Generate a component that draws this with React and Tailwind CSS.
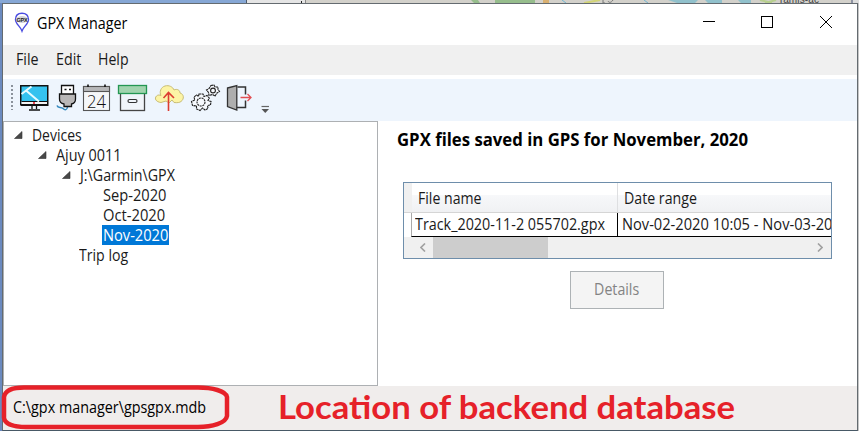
import React from 'react';

const sans = 'font-["Open_Sans","Noto_Sans",sans-serif]';

function Text({ children, className = '' }) {
  return <span className={`inline-block origin-left whitespace-pre ${className}`}>{children}</span>;
}

function AppLogo() {
  return (
    <svg width="16" height="21" viewBox="0 0 16 21" fill="none">
      <path d="M8 19 C6.5 14.5 1.5 12 1.5 7.5 C1.5 3.5 4 1.2 8 1.2 C12 1.2 14.5 3.5 14.5 7.5 C14.5 12 9.5 14.5 8 19Z" fill="#fff" stroke="#4a4ce0" strokeWidth="1.4" />
      <ellipse cx="8" cy="7.5" rx="5.8" ry="3.6" fill="#d2d2d8" />
      <text x="2.4" y="9.5" fontSize="5.5" fontWeight="700" textLength="11.2" fontFamily="Liberation Sans" fill="#222">GPX</text>
    </svg>
  );
}

function Backdrop() {
  return (
    <svg width="859" height="3" viewBox="0 0 859 3" className="block">
      <rect width="247" height="3" fill="#86a7d5" />
      <rect x="246" width="1" height="3" fill="#4d5968" />
      <rect x="247" width="59" height="3" fill="#e5e5e5" />
      <rect x="301" y="1" width="1" height="2" fill="#222" />
      <rect x="305" width="1" height="3" fill="#888" />
      <rect x="306" width="545" height="3" fill="#d3d1cb" />
      <path d="M471 0H478L480 3H474Z M495 0H535V3H495Z" fill="#96bd8c" />
      <path d="M543 0H549V3H543Z" fill="#d9b071" />
      <path d="M562 0L566 3M644 0L648 3" stroke="#72b5d2" />
      <path d="M584 3L600 0" stroke="#d2d477" strokeWidth="2" />
      <path d="M668 0H698L695 3H677Z M705 0H722V3H708Z M738 0H751V3H741Z" fill="#91c1cc" />
      <path d="M760 0L772 3M765 3L776 0" stroke="#b7cf8e" strokeWidth="2" />
      <text x="778" y="3" fontSize="10" textLength="41" fontFamily="Liberation Sans" fill="#444">Tamis-ac</text>
      <path d="M603 0V3H605M613 0C611 3 609 3 608 1" stroke="#777" fill="none" />
      <rect x="851" width="2" height="3" fill="#8e93a3" />
      <rect x="853" width="6" height="3" fill="#ddd" />
    </svg>
  );
}

function ToolbarIcons() {
  return (
    <svg width="275" height="42" viewBox="0 79 275 42" fill="none" className="block">
      <path d="M12 85V110" stroke="#8b929b" strokeWidth="2" strokeDasharray="2 2" />
      <g>
        <rect x="20.75" y="85.75" width="27" height="18.5" fill="#35c2ef" stroke="#111" strokeWidth="1.5" />
        <path d="M21.5 101.5H47V104H21.5Z" fill="#f4f4f4" />
        <path d="M21.5 101.5H47M20.5 105.5H48.5" stroke="#111" />
        <path d="M21.5 94L31.5 86.5M26 90.5L39 101.5" stroke="#e8fbff" strokeWidth="2" />
        <rect x="33" y="102" width="2" height="2" fill="#e74856" />
        <path d="M32 106V109M36.5 106V109M29 110H40" stroke="#111" strokeWidth="1.3" />
      </g>
      <g stroke="#111" strokeWidth="1.3">
        <path d="M57 105.5C58 108.5 61 106.5 63 108.5C65 110.5 67 110 67.5 107" stroke="#3388bd" strokeWidth="1.5" />
        <path d="M61.5 94V85.5H73.5V94" fill="#fff" />
        <path d="M64.5 89.5H66.5M69 89.5H71" />
        <path d="M59.5 94H75.5V99C75.5 102 74 103.5 71.5 104V106.5H64V104C61 103.5 59.5 102 59.5 99Z" fill="#b9b7b7" />
      </g>
      <g stroke="#555" strokeWidth="1.1">
        <rect x="83.5" y="86.5" width="26" height="24" fill="#f5f7f9" />
        <rect x="83.5" y="86.5" width="26" height="5" fill="#b6b7b9" />
        <path d="M88 84.5V87M105 84.5V87" stroke="#111" strokeWidth="1.6" />
        <text x="87" y="108" fontSize="19" textLength="19" lengthAdjust="spacingAndGlyphs" fontFamily="Open Sans" fontWeight="300" fill="#111" stroke="none">24</text>
      </g>
      <g>
        <rect x="120.5" y="92.5" width="24" height="18" fill="#f1f5fa" stroke="#444" strokeWidth="1.3" />
        <rect x="118.5" y="85.5" width="28" height="8" fill="#a1d4ae" stroke="#249753" strokeWidth="1.3" />
        <rect x="128" y="99.5" width="9" height="3" rx="1.5" stroke="#333" strokeWidth="1.2" />
      </g>
      <g>
        <path d="M161 102.5C156 102 154 98.5 156.5 96C158 94.5 160 95 161 95.5C159 92 161 87 165 86C169 84.8 173 87 174 90C177 88.5 180 90 180 93C184 94 184.5 99 181 101.5C180 102.5 177 103 174 102.5L172 100L169 103L166 101Z" fill="#fcf4a5" stroke="#c9bd75" />
        <path d="M168.5 111V93M163.5 98L168.5 92.5L174 98" stroke="#dc3c31" strokeWidth="1.6" />
      </g>
      <g stroke="#222" strokeWidth="1.1" fill="#f6f9fd">
        <path d="M199 94L203 94L204 96.5L207 95.5L209.3 98L208 100.5L211 101.5L210.5 105L207.5 105.5L208 108.5L205 110L202.5 108L200 110.5L196.5 109L196.5 106L192.5 105.5L191.5 101.5L194.8 100L194 97L196.5 95L198.5 96.5Z" strokeDasharray="2.4 .5" />
        <circle cx="201" cy="102" r="4" strokeDasharray="2 .7" />
        <path d="M211 85.5L214 85L215 87L218 87L218 89.5L219.5 91.5L217 93L215 96L212.5 94.5L209 95.5L208.5 92.5L206.5 90L209 88.5Z" strokeDasharray="2.4 .5" />
        <circle cx="213" cy="90.5" r="2.4" />
      </g>
      <g>
        <path d="M237.5 87H245.5V94.5M245.5 100.5V107.5H237" stroke="#333" strokeWidth="1.5" />
        <path d="M227.5 88L236.8 85.5V110L227.5 106.5Z" fill="#aeaeae" stroke="#333" strokeWidth="1.3" />
        <path d="M240.5 97.5H251M247.5 94L251 97.5L247.5 101" stroke="#e24e52" strokeWidth="1.3" />
      </g>
      <path d="M261.5 106.5H269" stroke="#666" strokeWidth="1.2" />
      <path d="M261.5 109H269L265.25 113Z" fill="#555" />
    </svg>
  );
}

const rows = [
  { label: 'Devices', pad: 'pl-[10px]', open: true, fit: 'scale-x-[.9]' },
  { label: 'Ajuy 0011', pad: 'pl-[34px]', open: true, fit: 'scale-x-[.93]' },
  { label: 'J:\\Garmin\\GPX', pad: 'pl-[58px]', open: true, fit: 'scale-x-[.92]' },
  { label: 'Sep-2020', pad: 'pl-[81px]', fit: 'scale-x-[.945]' },
  { label: 'Oct-2020', pad: 'pl-[81px]', fit: 'scale-x-[.95]' },
  { label: 'Nov-2020', pad: 'pl-[81px]', selected: true, fit: 'scale-x-[.945]' },
  { label: 'Trip log', pad: 'pl-[57px]', fit: 'scale-x-[.91]' },
];

function Tree() {
  return (
    <aside className="h-[265px] w-[375px] shrink-0 border border-[#adb0b3] bg-white pt-[3px]">
      {rows.map((r) => (
        <div key={r.label} className={`flex h-5 items-center ${r.pad}`}>
          <svg width="9" height="9" viewBox="0 0 9 9" className="mr-[8px] shrink-0">
            {r.open && <path d="M0.5 7.5L8 0.5V7.5Z" fill="#484848" stroke="#333" strokeWidth=".6" />}
          </svg>
          <div className={r.selected ? 'h-5 w-[67px] bg-[#0078d7] pl-px text-white' : 'h-5 pl-px'}>
            <Text className={`align-top leading-5 ${r.fit}`}>{r.label}</Text>
          </div>
        </div>
      ))}
    </aside>
  );
}

function FileTable() {
  return (
    <div className="ml-[25px] h-[77px] w-[429px] overflow-hidden border border-[#6e8eab] bg-white">
      <div className="flex h-[30px] border-b border-[#d5d5d5] bg-linear-to-b from-white from-40% via-[#f7f8fa] via-41% to-[#f0f1f3]">
        <div className="w-2 shrink-0 bg-[#f0f0f0]" />
        <div className="w-[206px] shrink-0 border-r border-[#dedfe1] pl-[6px]">
          <Text className="align-top leading-[31px] scale-x-[.91]">File name</Text>
        </div>
        <div className="pl-[6px]">
          <Text className="align-top leading-[31px] scale-x-[.915]">Date range</Text>
        </div>
      </div>
      <div className="ml-[7px] flex h-6 border-b border-l border-b-black border-l-[#aaa]">
        <div className="w-[206px] shrink-0 border-r border-black pl-[3px]">
          <Text className="align-top leading-[22px] scale-x-[.926]">Track_2020-11-2 055702.gpx</Text>
        </div>
        <div className="pl-1">
          <Text className="align-top leading-[22px] scale-x-[.945]">Nov-02-2020 10:05 - Nov-03-2020</Text>
        </div>
      </div>
      <div className="flex h-[21px] items-center bg-[#f0f0f0]">
        <div className="flex w-[29px] justify-center pl-2">
          <svg width="6" height="9" fill="none"><path d="M5 .5L1 4.5L5 8.5" stroke="#a0a0a0" strokeWidth="1.6" /></svg>
        </div>
        <div className="h-full w-[115px] bg-[#cdcdcd]" />
        <div className="flex flex-1 justify-end pr-[8px]">
          <svg width="6" height="9" fill="none"><path d="M1 .5L5 4.5L1 8.5" stroke="#a0a0a0" strokeWidth="1.6" /></svg>
        </div>
      </div>
    </div>
  );
}

export default function App() {
  return (
    <div className={`relative h-[431px] w-[859px] overflow-hidden bg-[#d5d5d5] text-[15.5px] text-[#1a1a1a] ${sans}`}>
      <Backdrop />
      <div className="flex h-[428px]">
        <div className="w-[2px] shrink-0 bg-[#6b8abf]" />
        <main className="flex w-[856px] shrink-0 flex-col border border-[#646b70] border-b-[#485966] bg-white">
          <header className="flex h-[41px] shrink-0 items-start pl-[11px] pt-2 text-black">
            <AppLogo />
            <div className="ml-[7px] grow">
              <Text className="align-top leading-[22px] scale-x-[.925]">GPX Manager</Text>
            </div>
            <svg width="135" height="24" viewBox="0 0 135 24" fill="none" className="mr-6" stroke="#000" shapeRendering="crispEdges">
              <path d="M5 9.5H17" />
              <rect x="63.5" y="4.5" width="11" height="11" />
              <path d="M122 4L134 16M134 4L122 16" shapeRendering="auto" />
            </svg>
          </header>
          <nav className="flex h-[30px] shrink-0 items-center bg-[#f0f0f0] pl-[12.5px]">
            <div className="w-10"><Text className="scale-x-[.92]">File</Text></div>
            <div className="w-[42px]"><Text className="scale-x-[.92]">Edit</Text></div>
            <Text className="scale-x-[.91]">Help</Text>
          </nav>
          <div className="mt-1 h-[42px] shrink-0 bg-[#eef5fd]">
            <div className="-ml-[3px]"><ToolbarIcons /></div>
          </div>
          <section className="flex h-[265px] shrink-0">
            <Tree />
            <div className="min-w-0 grow">
              <div className="h-[61px] pl-[19px] pt-[6px] text-[18px] font-bold text-black">
                <Text className="align-top leading-6 scale-x-[.93]">GPX files saved in GPS for November, 2020</Text>
              </div>
              <FileTable />
              <button className="ml-[192px] mt-3 block h-[38px] w-[94px] border border-[#adb2b5] bg-[#f4f4f4] text-[#838383]">
                <Text className="!origin-center scale-x-[.915]">Details</Text>
              </button>
            </div>
          </section>
          <footer className="flex h-11 shrink-0 items-center bg-[#f0edec] pl-[10px] text-black">
            <div className="w-[265px]"><Text className="scale-x-[.926]">C:\gpx manager\gpsgpx.mdb</Text></div>
            <Text className='-mt-[3px] scale-x-[1.05] font-["Lato",sans-serif] text-[33px] leading-[41px] font-bold text-[#e62129]'>Location of backend database</Text>
          </footer>
        </main>
        <div className="w-px bg-[#c6c6c6]" />
      </div>
      <svg width="232" height="46" viewBox="0 385 232 46" fill="none" className="absolute left-0 top-[385px]">
        <path d="M24 387.5H198C212 387.5 226 391 227 397V416C226 423 212 427 198 427H26C14 427 5 424 4 418V397C5 391 12 387.5 24 387.5Z" stroke="#e62129" strokeWidth="4.5" />
      </svg>
    </div>
  );
}
